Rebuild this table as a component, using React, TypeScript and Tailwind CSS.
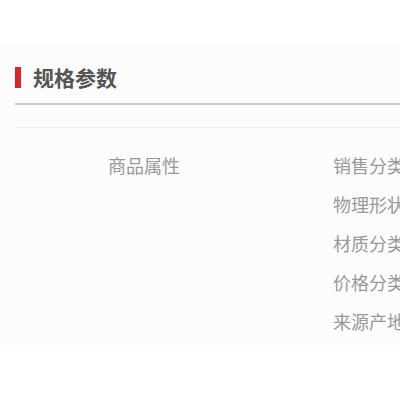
const props = ["销售分类", "物理形状", "材质分类", "价格分类", "来源产地"];

export default function App() {
  return (
    <div
      className="w-[400px] h-[400px] overflow-hidden bg-white pt-[45px]"
      style={{ fontFamily: '"Noto Sans CJK SC", "Noto Sans", sans-serif' }}
    >
      <div className="h-[305px] bg-[#fcfcfc] pl-[15px] pt-[21px]">
        <div className="border-b-2 border-[#cccccc] pb-[15px]">
          <div className="flex items-center h-[22px]">
            <span className="w-[6px] h-[21px] bg-[#d9262c]" />
            <h2 className="ml-[12px] text-[21px] leading-[22px] font-bold text-[#555555] whitespace-nowrap">
              规格参数
            </h2>
          </div>
        </div>
        <div className="h-[22px]" />
        <div className="border-t border-[#eeeeee] pt-[18px] flex">
          <div className="w-[318px] shrink-0 pl-[93px] text-[18px] leading-[39px] text-[#999999] whitespace-nowrap">
            商品属性
          </div>
          <div className="flex flex-col text-[18px] leading-[39px] text-[#999999] whitespace-nowrap">
            {props.map((p) => (
              <span key={p}>{p}</span>
            ))}
          </div>
        </div>
      </div>
    </div>
  );
}
